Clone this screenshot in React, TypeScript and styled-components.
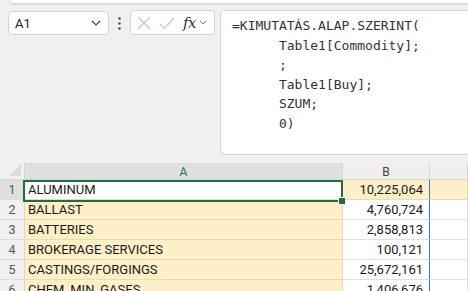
import React from 'react'
import styled, { createGlobalStyle } from 'styled-components'

const GlobalStyle = createGlobalStyle`
  html, body {
    margin: 0;
    padding: 0;
    background: #f0f0f0;
    overflow: hidden;
  }
  #root {
    width: 468px;
    height: 291px;
    overflow: hidden;
  }
`

const Page = styled.div`
  width: 468px;
  height: 291px;
  background: #f0f0f0;
  display: flex;
  flex-direction: column;
  overflow: hidden;
  font-family: Roboto, "Liberation Sans", sans-serif;
`

const RibbonEdge = styled.div`
  flex: none;
  height: 3px;
  margin-left: 10px;
  margin-right: -10px;
  background: #fff;
  border-radius: 0 0 0 6px;
  box-shadow: 0 1px 3px rgba(0, 0, 0, 0.18);
`

const FormulaBar = styled.div`
  flex: none;
  display: flex;
  align-items: flex-start;
  padding: 7px 0 0 8px;
`

const NameBox = styled.div`
  width: 101px;
  height: 24px;
  margin-top: 1px;
  box-sizing: border-box;
  background: #fff;
  border: 1px solid #d4d4d4;
  border-radius: 4px;
  display: flex;
  align-items: center;
  justify-content: space-between;
  padding: 0 7px 0 6px;
  font-size: 13px;
  color: #222;
`

const Dots = styled.div`
  width: 21px;
  display: flex;
  justify-content: center;
  padding-top: 7px;
`

const FxBox = styled.div`
  width: 85px;
  height: 25px;
  box-sizing: border-box;
  background: #fff;
  border: 1px solid #d4d4d4;
  border-radius: 4px;
  display: flex;
  align-items: center;
  padding-left: 6px;
`

const FxLabel = styled.span`
  font-family: "DejaVu Serif", "Liberation Serif", serif;
  font-style: italic;
  font-size: 15px;
  color: #333;
  margin-left: 8px;
  letter-spacing: -0.5px;
`

const FormulaBox = styled.pre`
  flex: 1;
  margin: 0 -10px 0 5px;
  height: 145px;
  box-sizing: border-box;
  background: #fff;
  border: 1px solid #d4d4d4;
  border-radius: 5px;
  padding: 5px 0 0 11px;
  font-family: "DejaVu Sans Mono", "Liberation Mono", monospace;
  font-size: 13px;
  line-height: 19.6px;
  color: #333;
  white-space: pre;
  overflow: hidden;
`

const Sheet = styled.div`
  flex: none;
  position: relative;
  margin-top: 8px;
  display: grid;
  grid-template-columns: 25px 318px 87px 1fr;
  grid-template-rows: 17px;
  grid-auto-rows: 20px;
  font-size: 13px;
`

const Corner = styled.div`
  position: relative;
  background: #f0f0f0;
  border-right: 1px solid #d6d6d6;
  border-bottom: 1px solid #d6d6d6;
  &::after {
    content: '';
    position: absolute;
    right: 3px;
    bottom: 3px;
    border-style: solid;
    border-width: 0 0 12px 12px;
    border-color: transparent transparent #dcdcdc transparent;
  }
`

const ColHead = styled.div<{ $active?: boolean }>`
  background: ${p => (p.$active ? '#e0e0e0' : '#efefef')};
  color: ${p => (p.$active ? '#217346' : '#444')};
  border-right: 1px solid #d6d6d6;
  border-bottom: 1px solid #d6d6d6;
  display: flex;
  align-items: center;
  justify-content: center;
  font-size: 12px;
  padding-top: 1px;
`

const RowHead = styled.div<{ $active?: boolean }>`
  background: ${p => (p.$active ? '#e0e0e0' : '#f0f0f0')};
  color: ${p => (p.$active ? '#217346' : '#555')};
  border-right: 1px solid #d6d6d6;
  border-bottom: 1px solid #dcdcdc;
  display: flex;
  align-items: center;
  justify-content: center;
  font-size: 12.5px;
`

type Tone = 'fill' | 'plain' | 'active'

const cellBg = { fill: '#fdefc7', plain: '#fff', active: '#fff' }

const Cell = styled.div<{ $tone: Tone; $num?: boolean; $edge?: boolean }>`
  background: ${p => cellBg[p.$tone]};
  border-bottom: 1px solid ${p => (p.$tone === 'plain' ? '#e1e1e1' : '#e9dcb2')};
  border-right: 1px solid ${p => (p.$edge ? '#3f73d3' : p.$tone === 'plain' ? '#e1e1e1' : '#e9dcb2')};
  color: #1a1a1a;
  display: flex;
  align-items: center;
  justify-content: ${p => (p.$num ? 'flex-end' : 'flex-start')};
  padding: ${p => (p.$num ? '0 6px 0 0' : '0 0 0 3px')};
  white-space: nowrap;
  overflow: hidden;
`

const Selection = styled.div`
  position: absolute;
  left: 23px;
  top: 17px;
  width: 320px;
  height: 22px;
  border: 2px solid #1e6e42;
  box-sizing: border-box;
  pointer-events: none;
  &::after {
    content: '';
    position: absolute;
    right: -5px;
    bottom: -5px;
    width: 6px;
    height: 6px;
    background: #1e6e42;
    border: 1px solid #fff;
  }
`

const rows = [
  ['ALUMINUM', '10,225,064'],
  ['BALLAST', '4,760,724'],
  ['BATTERIES', '2,858,813'],
  ['BROKERAGE SERVICES', '100,121'],
  ['CASTINGS/FORGINGS', '25,672,161'],
  ['CHEM, MIN, GASES', '1,406,676'],
]

const formula = `=KIMUTATÁS.ALAP.SZERINT(
      Table1[Commodity];
      ;
      Table1[Buy];
      SZUM;
      0)`

const App = () => (
  <Page>
    <GlobalStyle />
    <RibbonEdge />
    <FormulaBar>
      <NameBox>
        <span>A1</span>
        <svg width="10" height="6" viewBox="0 0 10 6">
          <path d="M1 1l4 4 4-4" fill="none" stroke="#444" strokeWidth="1.2" />
        </svg>
      </NameBox>
      <Dots>
        <svg width="3" height="13" viewBox="0 0 3 13">
          <circle cx="1.5" cy="1.5" r="1.2" fill="#444" />
          <circle cx="1.5" cy="6.5" r="1.2" fill="#444" />
          <circle cx="1.5" cy="11.5" r="1.2" fill="#444" />
        </svg>
      </Dots>
      <FxBox>
        <svg width="14" height="14" viewBox="0 0 14 14">
          <path d="M1 1l12 12M13 1L1 13" stroke="#c4c4c4" strokeWidth="1.2" />
        </svg>
        <svg width="16" height="14" viewBox="0 0 16 14" style={{ marginLeft: 8 }}>
          <path d="M1 8l4.5 4.5L15 2" fill="none" stroke="#c4c4c4" strokeWidth="1.2" />
        </svg>
        <FxLabel>fx</FxLabel>
        <svg width="8" height="5" viewBox="0 0 8 5" style={{ marginLeft: 3 }}>
          <path d="M1 1l3 3 3-3" fill="none" stroke="#777" strokeWidth="1" />
        </svg>
      </FxBox>
      <FormulaBox>{formula}</FormulaBox>
    </FormulaBar>
    <Sheet>
      <Corner />
      <ColHead $active>A</ColHead>
      <ColHead>B</ColHead>
      <ColHead />
      {rows.map(([name, val], i) => (
        <React.Fragment key={name}>
          <RowHead $active={i === 0}>{i + 1}</RowHead>
          <Cell $tone={i === 0 ? 'active' : 'fill'}>{name}</Cell>
          <Cell $tone={i === 0 ? 'fill' : 'plain'} $num $edge>{val}</Cell>
          <Cell $tone={i === 0 ? 'fill' : 'plain'} />
        </React.Fragment>
      ))}
      <Selection />
    </Sheet>
  </Page>
)

export default App
